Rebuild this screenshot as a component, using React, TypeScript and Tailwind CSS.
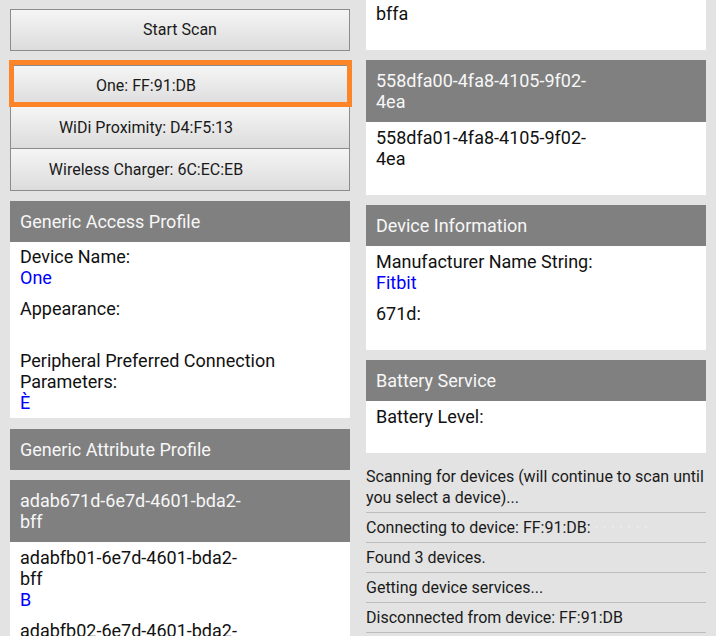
import React from "react";

const font = { fontFamily: "Roboto, 'Noto Sans', sans-serif" };

interface Item {
  label: React.ReactNode;
  value?: string;
}

const Header: React.FC<{ children: React.ReactNode }> = ({ children }) => (
  <div className="bg-[#808080] px-[10px] py-[10px] text-[18px] leading-[21px] text-[#f7f7f7]">
    {children}
  </div>
);

const Body: React.FC<{ items: Item[]; className?: string }> = ({
  items,
  className = "pt-[5px]",
}) => (
  <div
    className={`flex flex-col gap-[10px] bg-white px-[10px] pb-[5px] text-[18px] leading-[21px] text-[#111] ${className}`}
  >
    {items.map((item, index) => (
      <div key={index}>
        <div>{item.label}</div>
        <div className="min-h-[21px] text-[#0000ff]">{item.value}</div>
      </div>
    ))}
  </div>
);

const DeviceButton: React.FC<{
  label: string;
  first?: boolean;
  selected?: boolean;
}> = ({ label, first, selected }) => (
  <div className="relative">
    <button
      className={`flex h-[42px] w-full items-center justify-center border-x border-b border-[#8c8c8c] bg-gradient-to-b from-[#f5f5f5] to-[#dcdcdc] pr-[68px] text-[16px] text-[#1a1a1a] ${
        first ? "border-t" : ""
      }`}
    >
      {label}
    </button>
    {selected && (
      <div className="absolute -top-[5px] -left-[1px] -right-[2px] bottom-0 border-[5px] border-[#fd8527]" />
    )}
  </div>
);

const logs = [
  "Scanning for devices (will continue to scan until you select a device)...",
  "Connecting to device: FF:91:DB:",
  "Found 3 devices.",
  "Getting device services...",
  "Disconnected from device: FF:91:DB",
];

export default function App() {
  return (
    <div
      className="flex h-[636px] w-[716px] items-start gap-[16px] overflow-hidden bg-[#e3e3e3] px-[10px]"
      style={font}
    >
      {/* left column */}
      <div className="w-[340px] shrink-0 pt-[9px]">
        <button className="block h-[42px] w-full border border-[#8c8c8c] bg-gradient-to-b from-[#f5f5f5] to-[#dcdcdc] text-[16px] text-[#1a1a1a]">
          Start Scan
        </button>

        <div className="mt-[14px]">
          <DeviceButton label="One: FF:91:DB" first selected />
          <DeviceButton label="WiDi Proximity: D4:F5:13" />
          <DeviceButton label="Wireless Charger: 6C:EC:EB" />
        </div>

        <div className="mt-[10px]">
          <Header>Generic Access Profile</Header>
          <Body
            className="pt-[4px]"
            items={[
              { label: "Device Name:", value: "One" },
              { label: "Appearance:" },
              {
                label: (
                  <>
                    Peripheral Preferred Connection
                    <br />
                    Parameters:
                  </>
                ),
                value: "È",
              },
            ]}
          />
        </div>

        <div className="mt-[11px]">
          <Header>Generic Attribute Profile</Header>
        </div>

        <div className="mt-[10px]">
          <Header>
            adab671d-6e7d-4601-bda2-
            <br />
            bff
          </Header>
          <Body
            items={[
              {
                label: (
                  <>
                    adabfb01-6e7d-4601-bda2-
                    <br />
                    bff
                  </>
                ),
                value: "B",
              },
              {
                label: (
                  <>
                    adabfb02-6e7d-4601-bda2-
                    <br />
                    bff
                  </>
                ),
              },
            ]}
          />
        </div>
      </div>

      {/* right column */}
      <div className="w-[340px] shrink-0">
        <Body className="pt-[3px]" items={[{ label: "bffa" }]} />

        <div className="mt-[10px]">
          <Header>
            558dfa00-4fa8-4105-9f02-
            <br />
            4ea
          </Header>
          <Body
            items={[
              {
                label: (
                  <>
                    558dfa01-4fa8-4105-9f02-
                    <br />
                    4ea
                  </>
                ),
              },
            ]}
          />
        </div>

        <div className="mt-[10px]">
          <Header>Device Information</Header>
          <Body
            items={[
              { label: "Manufacturer Name String:", value: "Fitbit" },
              { label: "671d:" },
            ]}
          />
        </div>

        <div className="mt-[10px]">
          <Header>Battery Service</Header>
          <Body items={[{ label: "Battery Level:" }]} />
        </div>

        <ul className="mt-[9px] text-[16px] leading-[21px] text-[#1a1a1a]">
          {logs.map((log, index) => (
            <li
              key={index}
              className="whitespace-nowrap border-b border-[#bdbdbd] py-[4px]"
            >
              {index === 0 ? (
                <>
                  Scanning for devices (will continue to scan until
                  <br />
                  you select a device)...
                </>
              ) : index === 1 ? (
                <>
                  {log}
                  <span className="text-[#ededed]"> · · · · · · ·</span>
                </>
              ) : (
                log
              )}
            </li>
          ))}
        </ul>
      </div>
    </div>
  );
}
